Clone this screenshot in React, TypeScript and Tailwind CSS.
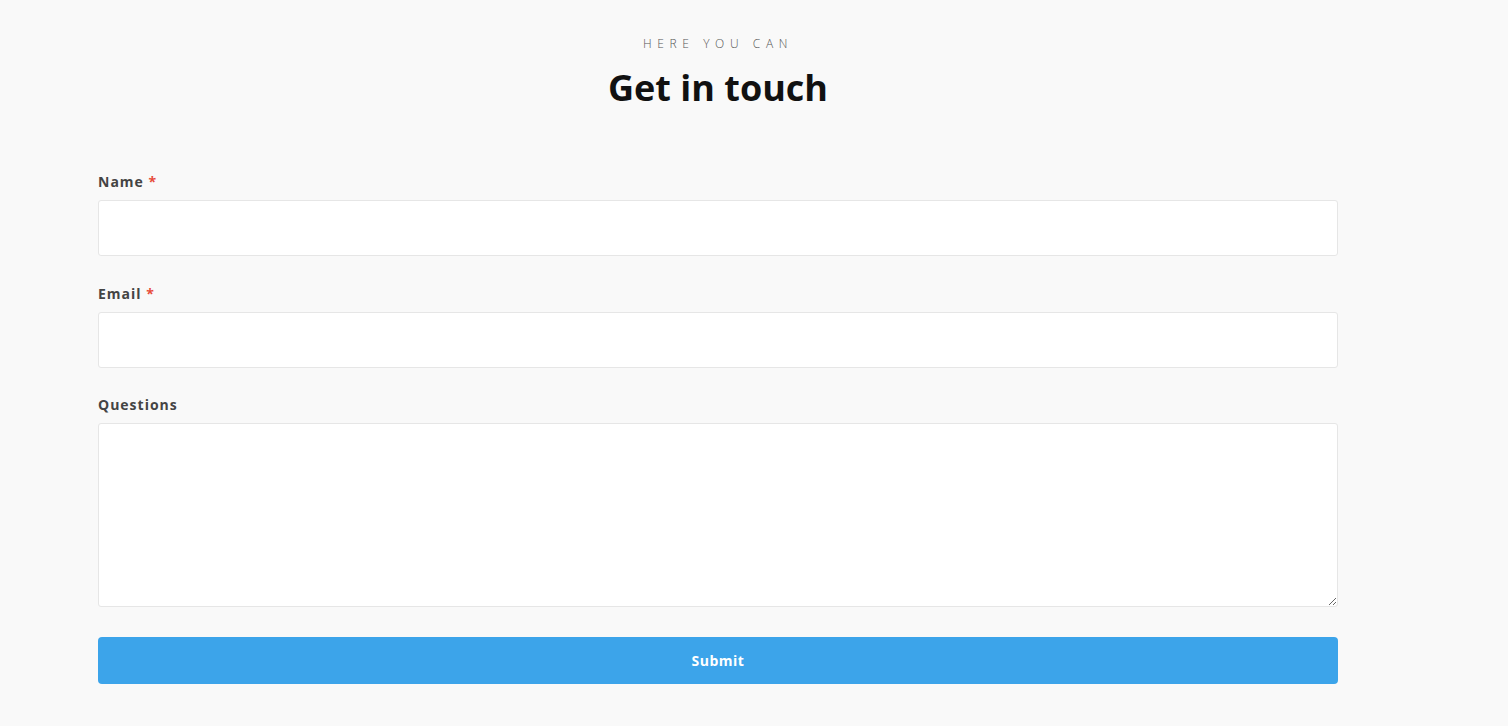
import React from "react";

export default function App() {
  const font = { fontFamily: '"Open Sans", "Noto Sans", sans-serif' };
  return (
    <div className="min-h-[726px] w-full bg-[#f9f9f9]" style={font}>
      <div className="ml-[98px] w-[1240px] pt-[36px]">
        <div className="text-center text-[12px] font-light leading-[16px] tracking-[5.6px] text-[#555]">
          HERE YOU CAN
        </div>
        <h1 className="mt-[16px] text-center text-[36px] font-bold leading-[40px] text-[#111]">
          Get in touch
        </h1>
        <form className="mt-[64px] flex flex-col">
          <label className="block text-[14px] font-bold leading-[20px] tracking-[1px] text-[#444]">
            Name <span className="text-[#e74c3c]">*</span>
          </label>
          <input className="mt-[8px] h-[56px] w-full rounded-[3px] border border-[#e6e6e6] bg-white outline-none" />
          <label className="mt-[28px] block text-[14px] font-bold leading-[20px] tracking-[1px] text-[#444]">
            Email <span className="text-[#e74c3c]">*</span>
          </label>
          <input className="mt-[8px] h-[56px] w-full rounded-[3px] border border-[#e6e6e6] bg-white outline-none" />
          <label className="mt-[27px] block text-[14px] font-bold leading-[20px] tracking-[1px] text-[#444]">
            Questions
          </label>
          <textarea className="mt-[8px] block h-[184px] w-full rounded-[3px] border border-[#e6e6e6] bg-white outline-none" />
          <button
            type="button"
            className="mt-[30px] h-[47px] w-full rounded-[4px] bg-[#3ca4ea] text-[14px] font-bold tracking-[0.5px] text-white"
          >
            Submit
          </button>
        </form>
      </div>
    </div>
  );
}
